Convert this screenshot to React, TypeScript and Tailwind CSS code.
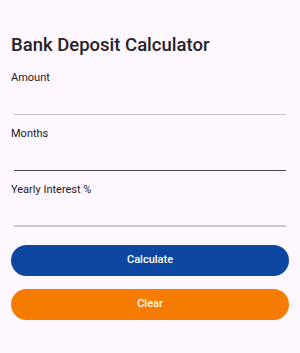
export default function App() {
  const fields = [
    { label: "Amount", line: "border-b border-[#c4c0c6]" },
    { label: "Months", line: "border-b border-[#49454f]" },
    { label: "Yearly Interest %", line: "border-b-2 border-[#c9c5cb]" },
  ];

  return (
    <div
      className="w-[300px] h-[353px] bg-[#fef7ff] text-[#1d1b20] px-[11px] pt-[35px]"
      style={{ fontFamily: "Roboto, 'Noto Sans', sans-serif" }}
    >
      <h1 className="text-[18.5px] leading-[21px] font-medium text-[#25232a]">Bank Deposit Calculator</h1>

      <div className="mt-[15px] flex flex-col gap-[12px]">
        {fields.map((f) => (
          <div key={f.label} className="flex flex-col">
            <label className="text-[11px] leading-[13px] font-normal text-[#1d1b20]">{f.label}</label>
            <div className={`mx-[3px] h-[31px] ${f.line}`} />
          </div>
        ))}
      </div>

      <div className="mt-[18px] flex flex-col gap-[13px]">
        <button className="h-[31px] w-full rounded-full bg-[#0d47a1] text-white text-[11px] font-medium">
          Calculate
        </button>
        <button className="h-[31px] w-full rounded-full bg-[#f57c00] text-white text-[11px] font-medium">
          Clear
        </button>
      </div>
    </div>
  );
}
